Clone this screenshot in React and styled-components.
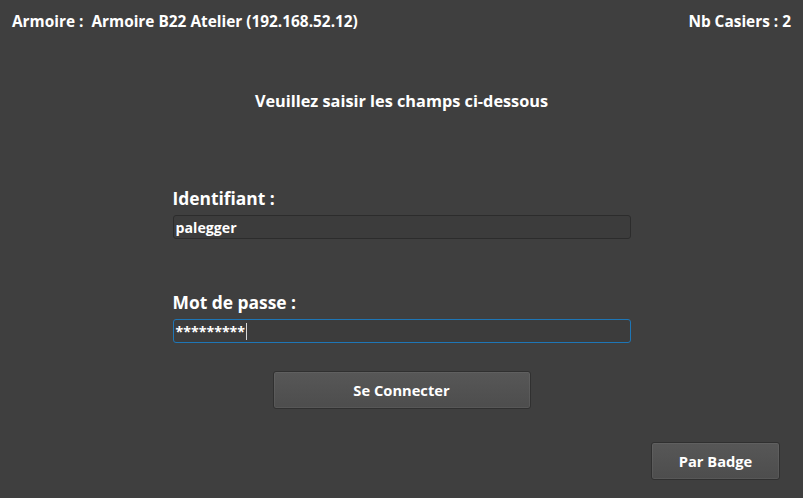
// Packages
import React from "react"
import styled, { createGlobalStyle } from "styled-components"

// Styles
const GlobalStyle = createGlobalStyle`
    html, body {
        margin: 0;
        padding: 0;
        background: #3f3f3f;
    }

    body {
        font-family: "Open Sans", "Noto Sans", sans-serif;
        color: #ffffff;
    }
`

const Page = styled.div`
    height: 498px;
    display: flex;
    flex-direction: column;
    background: #3f3f3f;
`

const Header = styled.header`
    height: 42px;
    display: flex;
    align-items: center;
    justify-content: space-between;
    padding: 0 12px;
    font-size: 15.4px;
    font-weight: 700;
`

const Title = styled.h1`
    margin: 49px 0 0 0;
    text-align: center;
    font-size: 16.3px;
    font-weight: 700;
    line-height: 20px;
`

const Form = styled.div`
    width: 458px;
    margin: 77px auto 0 auto;
    display: flex;
    flex-direction: column;
`

const Label = styled.div`
    font-size: 17.4px;
    font-weight: 700;
    line-height: 20px;
    margin-top: ${(props) => props.$top || 0}px;
    margin-bottom: 7px;
`

const Field = styled.div`
    height: 24px;
    box-sizing: border-box;
    display: flex;
    align-items: center;
    padding: 0 2px;
    background: #3c3c3c;
    border: 1px solid ${(props) => (props.$focused ? "#1e76b6" : "#2c2c2c")};
    border-radius: 3px;
    font-size: 14.2px;
    font-weight: 700;
`

const Caret = styled.span`
    display: inline-block;
    width: 1px;
    height: 17px;
    background: #d8d8d8;
    margin-left: 1px;
`

const Button = styled.button`
    height: 38px;
    box-sizing: border-box;
    border: 1px solid #303030;
    border-radius: 3px;
    background: linear-gradient(#575757, #4d4d4d);
    color: #ffffff;
    font-family: inherit;
    font-size: 14.7px;
    font-weight: 700;
    box-shadow: inset 0 0 0 1px rgba(255, 255, 255, 0.06);
`

const ConnectButton = styled(Button)`
    width: 258px;
    align-self: center;
    margin-top: 28px;
`

const Footer = styled.div`
    margin-top: auto;
    display: flex;
    justify-content: flex-end;
    padding: 0 23px 18px 0;
`

const BadgeButton = styled(Button)`
    width: 129px;
`

function App() {
    return (
        <Page>
            <GlobalStyle />

            <Header>
                <span>Armoire : &nbsp;Armoire B22 Atelier (192.168.52.12)</span>
                <span>Nb Casiers : 2</span>
            </Header>

            <Title>Veuillez saisir les champs ci-dessous</Title>

            <Form>
                <Label>Identifiant :</Label>
                <Field>palegger</Field>

                <Label $top={53}>Mot de passe :</Label>
                <Field $focused>
                    *********
                    <Caret />
                </Field>

                <ConnectButton>Se Connecter</ConnectButton>
            </Form>

            <Footer>
                <BadgeButton>Par Badge</BadgeButton>
            </Footer>
        </Page>
    )
}

export default App
